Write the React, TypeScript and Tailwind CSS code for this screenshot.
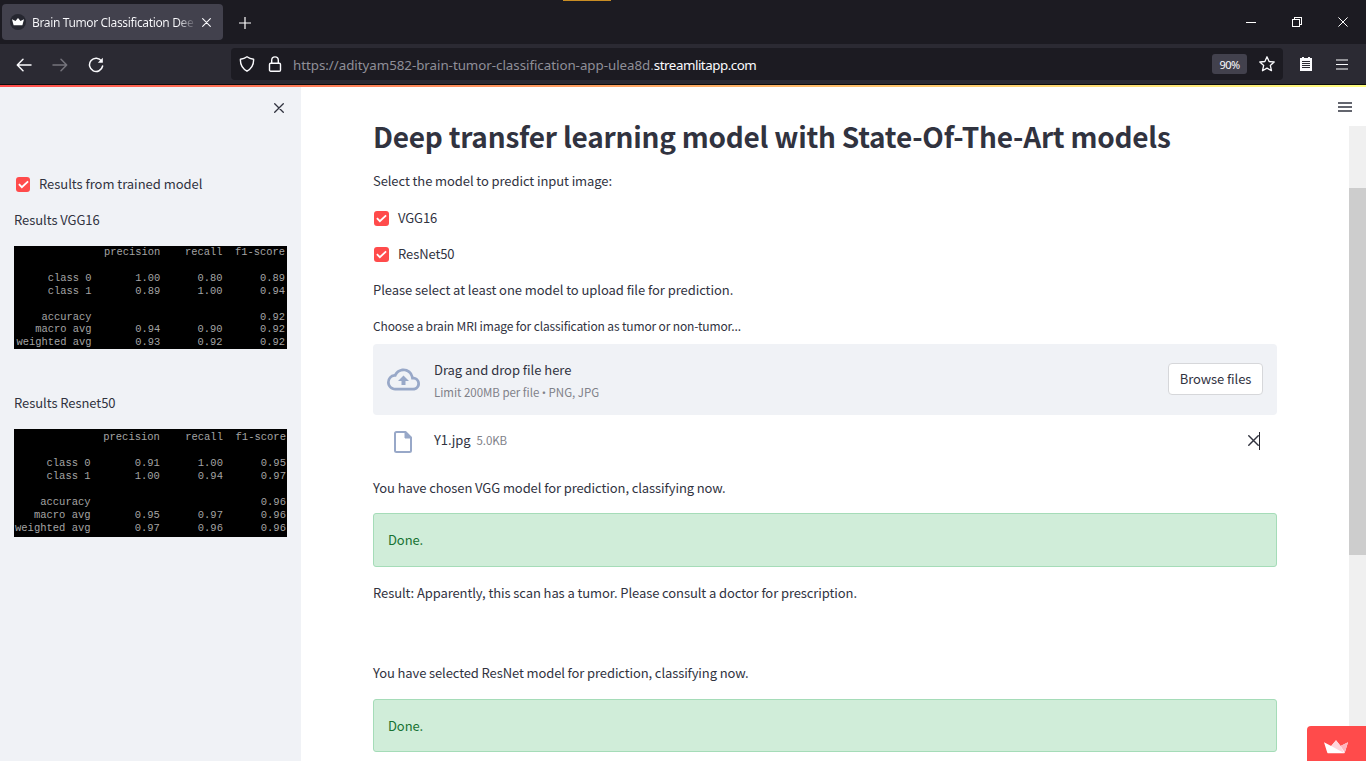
import React from "react";

const vggReport = `              precision    recall  f1-score

     class 0       1.00      0.80      0.89
     class 1       0.89      1.00      0.94

    accuracy                           0.92
   macro avg       0.94      0.90      0.92
weighted avg       0.93      0.92      0.92`;

const resnetReport = `              precision    recall  f1-score

     class 0       0.91      1.00      0.95
     class 1       1.00      0.94      0.97

    accuracy                           0.96
   macro avg       0.95      0.97      0.96
weighted avg       0.97      0.96      0.96`;

function CrossIcon({ className }: { className: string }) {
  return (
    <svg viewBox="0 0 10 10" className={className} fill="none" stroke="currentColor" strokeLinecap="round">
      <path d="M.7.7l8.6 8.6M9.3.7L.7 9.3" />
    </svg>
  );
}

function Crown({ className }: { className: string }) {
  return (
    <svg viewBox="0 0 24 14" className={className}>
      <path d="M0 2.2L7.2 6 12 .2 16.6 6 24 2.2 20.8 12.4Q20.4 13.3 19.4 13.3H4.6Q3.6 13.3 3.2 12.4Z" fill="#fff" />
      <path d="M7.2 6L12 .2 16.6 6 20 13z" fill="#ffd5dc" />
      <path d="M16.6 6L24 2.2 20.8 12.4z" fill="#ffb3bd" />
    </svg>
  );
}

function TabBar() {
  return (
    <div className="relative flex h-11 items-start bg-[#1c1b22]">
      <div className="absolute left-[563px] top-0 h-px w-12 bg-[#c98d24]" />
      <div className="ml-[2px] mt-1 flex h-9 w-[221px] items-center rounded bg-[#42414d] text-[#fbfbfe]">
        <div className="ml-2 flex size-4 items-center justify-center rounded-full bg-[#262730]">
          <svg viewBox="0 0 12 8" className="h-2 w-3">
            <path d="M0 1.2l3.5 1.9L6 0l2.5 3.1L12 1.2l-1.6 6H1.6z" fill="#fff" />
          </svg>
        </div>
        <div className="ml-[6px] w-[162px] whitespace-nowrap bg-linear-to-r from-[#fbfbfe] from-90% to-[#5b5a65] bg-clip-text pt-px font-['Noto_Sans'] text-[12px] leading-5 text-transparent tracking-[-0.36px]">
          Brain Tumor Classification Dee
        </div>
        <CrossIcon className="ml-2 size-[9px] stroke-[1.2]" />
      </div>
      <svg viewBox="0 0 12 12" className="ml-4 mt-[17px] size-3 stroke-white" fill="none" strokeWidth="1.2">
        <path d="M6 0v12M0 6h12" />
      </svg>
      <div className="ml-auto flex h-11 items-center text-white">
        <div className="mr-9 h-px w-[10px] bg-white" />
        <svg viewBox="0 0 10 10" className="mr-9 size-[10px]" fill="none" stroke="white" shapeRendering="crispEdges">
          <path d="M.5 2.5h7v7h-7zM2.5 2.5v-2h7v7h-2" />
        </svg>
        <CrossIcon className="mr-[18px] size-[10px] stroke-[1]" />
      </div>
    </div>
  );
}

function ToolBar() {
  return (
    <div className="flex h-10 items-center bg-[#2b2a33]">
      <svg viewBox="0 0 16 14" className="ml-4 mt-px h-[14px] w-4" fill="none" stroke="#fbfbfe" strokeWidth="1.5" strokeLinecap="round" strokeLinejoin="round">
        <path d="M15 7H1.5M7 1.3L1.3 7 7 12.7" />
      </svg>
      <svg viewBox="0 0 16 14" className="ml-5 mt-px h-[14px] w-4" fill="none" stroke="#75747c" strokeWidth="1.5" strokeLinecap="round" strokeLinejoin="round">
        <path d="M1 7h13.5M9 1.3L14.7 7 9 12.7" />
      </svg>
      <svg viewBox="0 0 16 16" className="ml-5 mt-px size-4" fill="none" stroke="#fbfbfe" strokeWidth="1.5" strokeLinecap="round">
        <path d="M13.6 4.2A6.6 6.6 0 1 0 14.6 9" />
        <path d="M14.8.8v5h-5z" fill="#fbfbfe" stroke="none" />
      </svg>
      <div className="ml-[127px] flex h-8 w-[1052px] items-center rounded bg-[#1c1b22]">
        <svg viewBox="0 0 16 16" className="ml-2 size-4" fill="none" stroke="#fbfbfe" strokeWidth="1.4" strokeLinejoin="round">
          <path d="M8 .8Q10.7 2.7 14.6 3.2Q15 11.2 8 15.2Q1 11.2 1.4 3.2Q5.3 2.7 8 .8z" />
        </svg>
        <svg viewBox="0 0 14 16" className="ml-[13px] h-4 w-[14px]" fill="none" stroke="#fbfbfe" strokeWidth="1.4">
          <rect x="1.5" y="7.2" width="11" height="8" rx="1.2" />
          <path d="M3.7 7V4.2a3.3 3.3 0 0 1 6.6 0V7" />
        </svg>
        <div className="ml-[11px] whitespace-nowrap pt-[2px] font-['Noto_Sans'] text-[13.33px] leading-5 tracking-[-0.03px] text-[#8f8f98]">
          https://adityam582-brain-tumor-classification-app-ulea8d.<span className="tracking-[-0.46px] text-[#fbfbfe]">streamlitapp.com</span>
        </div>
        <div className="ml-auto flex h-5 w-[35px] items-center justify-center rounded-[3px] bg-[#42414d] pt-px font-['Noto_Sans'] text-[11px] tracking-[-0.5px] text-[#fbfbfe]">
          90%
        </div>
        <svg viewBox="0 0 16 16" className="ml-3 mr-2 size-4" fill="none" stroke="#fbfbfe" strokeWidth="1.3" strokeLinejoin="round">
          <path d="M8 .8l2.1 4.7 5.1.5-3.9 3.4 1.2 5.3L8 12.1l-4.5 2.6 1.2-5.3L.8 6l5.1-.5z" />
        </svg>
      </div>
      <svg viewBox="0 0 12 14" className="ml-[17px] h-[14px] w-3" shapeRendering="crispEdges">
        <path d="M0 1h2V0h2v1h4V0h2v1h2v13H0z" fill="#fbfbfe" />
        <path d="M2 4.5h8M2 6.5h8M2 8.5h8M2 10.5h8" stroke="#2b2a33" />
      </svg>
      <svg viewBox="0 0 12 11" className="ml-6 h-[11px] w-3" stroke="#fbfbfe" strokeWidth="1.2">
        <path d="M0 1h12M0 5.5h12M0 10h12" />
      </svg>
    </div>
  );
}

function Checkbox({ label, boxClass }: { label: string; boxClass: string }) {
  return (
    <label className="flex h-5 items-center">
      <span className={`flex items-center justify-center rounded-[3px] bg-[#ff4b4b] ${boxClass}`}>
        <svg viewBox="0 0 12 9" className="h-[9px] w-[11px]" fill="none" stroke="white" strokeWidth="2">
          <path d="M1 4.2l3.2 3.3L11 1" />
        </svg>
      </span>
      <span>{label}</span>
    </label>
  );
}

function Sidebar() {
  return (
    <aside className="flex w-[301px] shrink-0 flex-col bg-[#f0f2f6] pl-[14px]">
      <CrossIcon className="ml-[260px] mt-4 size-[10px] shrink-0 stroke-[1.3]" />
      <div className="ml-[2px] mt-[61px] tracking-[-0.03px]">
        <Checkbox label="Results from trained model" boxClass="mr-[9px] h-[15px] w-[14px]" />
      </div>
      <p className="mt-4 h-5 tracking-[-0.06px]">Results VGG16</p>
      <pre className="mt-4 h-[103px] w-[273px] overflow-hidden bg-black pl-[2.5px] font-['Liberation_Mono'] text-[10.42px] leading-[12.9px] text-[#a4a4a4]">
        {vggReport}
      </pre>
      <p className="mt-11 h-5 tracking-[-0.06px]">Results Resnet50</p>
      <pre className="mt-4 h-[108px] w-[273px] overflow-hidden bg-black pl-px pt-[1.5px] font-['Liberation_Mono'] text-[10.5px] leading-[13.1px] text-[#a4a4a4]">
        {resnetReport}
      </pre>
    </aside>
  );
}

function Uploader() {
  return (
    <section className="mt-[7px] flex h-[71px] shrink-0 items-center rounded bg-[#f0f2f6] px-[14px]">
      <svg viewBox="0 0 24 24" className="h-[33px] w-[33px]" fill="#98a8c8">
        <path d="M19.35 10.04A7.49 7.49 0 0 0 12 4C9.11 4 6.6 5.64 5.35 8.04A5.994 5.994 0 0 0 0 14c0 3.31 2.69 6 6 6h13c2.76 0 5-2.24 5-5 0-2.64-2.05-4.78-4.65-4.96zM19 18H6c-2.21 0-4-1.79-4-4 0-2.05 1.53-3.76 3.56-3.97l1.07-.11.5-.95A5.469 5.469 0 0 1 12 6c2.62 0 4.88 1.86 5.39 4.43l.3 1.5 1.53.11A2.98 2.98 0 0 1 22 15c0 1.65-1.35 3-3 3zM8 13h2.55v3h2.9v-3H16l-4-4z" />
      </svg>
      <div className="ml-[14px] pt-[2px] tracking-[-0.03px]">
        <p className="h-[22px]">Drag and drop file here</p>
        <p className="h-5 text-[11.5px] text-[#808189]">
          Limit 200MB per file <span className="font-['Open_Sans']">•</span> PNG, JPG
        </p>
      </div>
      <button className="mb-[2px] ml-auto h-8 w-[95px] rounded border border-[#d6d7da] bg-white">Browse files</button>
    </section>
  );
}

function Done({ className }: { className: string }) {
  return (
    <div className={`flex shrink-0 items-center rounded-[3px] border border-[#a5dcb8] bg-[#d0edd9] pl-[14px] text-[#177233] ${className}`}>
      Done.
    </div>
  );
}

function Main() {
  return (
    <main className="relative flex min-w-0 flex-1 bg-white">
      <div className="ml-[72px] flex w-[904px] flex-col tracking-[-0.09px]">
        <h1 className="mt-[25px] h-12 whitespace-nowrap text-[28px] font-bold leading-[48px] tracking-[-0.24px]">
          Deep transfer learning model with State-Of-The-Art models
        </h1>
        <p className="mt-[11px] h-5">Select the model to predict input image:</p>
        <div className="ml-px mt-[17px]">
          <Checkbox label="VGG16" boxClass="mr-[9px] size-[15px]" />
        </div>
        <div className="ml-px mt-4">
          <Checkbox label="ResNet50" boxClass="mr-[9px] size-[15px]" />
        </div>
        <p className="mt-4 h-5 tracking-[-0.06px]">Please select at least one model to upload file for prediction.</p>
        <p className="mt-4 h-5 text-[12px] tracking-[-0.14px]">Choose a brain MRI image for classification as tumor or non-tumor...</p>
        <div className="pt-px"><Uploader /></div>
        <div className="flex h-[51px] shrink-0 items-center pr-[17px]">
          <svg viewBox="0 0 18 22" className="ml-[21px] mt-[3px] h-[22px] w-[18px]" fill="none" stroke="#98a8c8" strokeWidth="2">
            <path d="M3 1h8.5L17 6.500V19.500Q17 21 15.500 21H2.500Q1 21 1 19.500V2.500Q1 1 2.500 1z" strokeLinejoin="round" />
            <path d="M11 1v6h6z" fill="#98a8c8" strokeWidth="1" />
          </svg>
          <span className="mb-px ml-[22px]">Y1.jpg</span>
          <span className="mb-px ml-[6px] text-[11.5px] text-[#808189]">5.0KB</span>
          <CrossIcon className="mb-px ml-auto size-[11px] stroke-[1.3]" />
          <span className="h-[18px] w-px bg-[#262730]" />
        </div>
        <p className="mt-3 h-5">You have chosen VGG model for prediction, classifying now.</p>
        <div className="mt-[15px]"><Done className="h-[54px]" /></div>
        <p className="mt-4 h-5">Result: Apparently, this scan has a tumor. Please consult a doctor for prescription.</p>
        <p className="mt-[60px] h-5 tracking-[-0.11px]">You have selected ResNet model for prediction, classifying now.</p>
        <div className="mt-4"><Done className="h-[53px]" /></div>
      </div>
      <svg viewBox="0 0 14 10" className="absolute right-[14px] top-[15px] h-[10px] w-[14px]" stroke="#31333f" strokeWidth="1.5">
        <path d="M0 1h14M0 5h14M0 9h14" />
      </svg>
      <div className="absolute right-0 top-[39px] h-[635px] w-[17px] bg-[#f0f0f0] pt-[62px]">
        <div className="h-[367px] bg-[#cdcdcd]" />
      </div>
      <div className="absolute bottom-0 right-0 flex h-[35px] w-[59px] items-center justify-center rounded-tl bg-[#ff4b4b] pr-px pt-[6px]">
        <Crown className="h-[14px] w-6" />
      </div>
    </main>
  );
}

export default function App() {
  return (
    <div className="flex h-[761px] w-[1366px] flex-col overflow-hidden font-['Noto_Sans_CJK_SC',sans-serif] text-[13px] leading-5 text-[#31333f]">
      <TabBar />
      <ToolBar />
      <div className="h-px shrink-0 bg-[#0c0c0d]" />
      <div className="h-[2px] shrink-0 bg-linear-to-r from-[#ff4b4b] to-[#fffd80]" />
      <div className="flex min-h-0 flex-1">
        <Sidebar />
        <Main />
      </div>
    </div>
  );
}
